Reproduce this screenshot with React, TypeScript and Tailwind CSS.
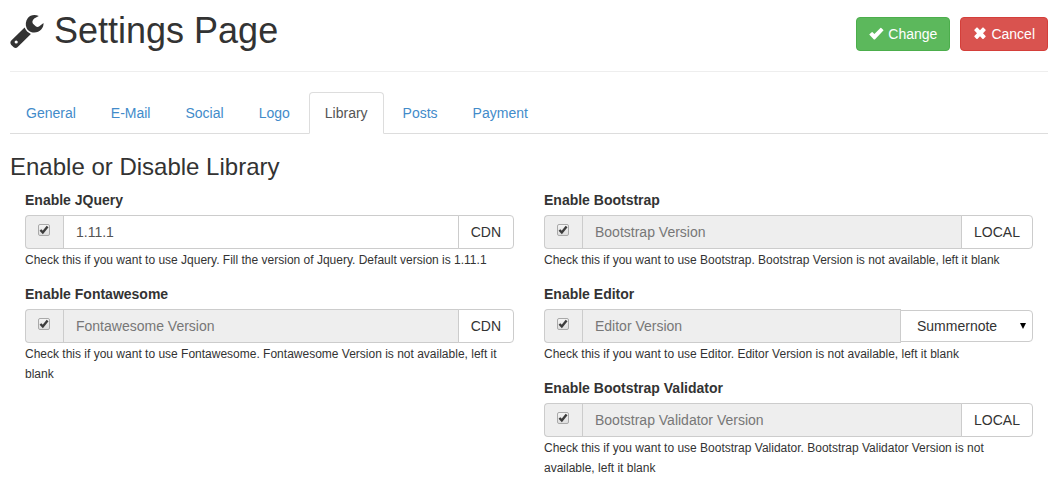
import { useState, type ReactNode } from "react";

const tabs = ["General", "E-Mail", "Social", "Logo", "Library", "Posts", "Payment"];

function WrenchIcon() {
  return (
    <svg viewBox="0 0 36 36" className="h-9 w-9 shrink-0" fill="currentColor" aria-hidden="true">
      <path
        fillRule="evenodd"
        d="M28.800 3C24.600 1.200 20.200 2 17.700 5.200C15.600 8 15.300 11.600 16.500 14.800C17.300 16.800 18.800 18.300 20.900 19C24.800 20.300 28.800 19.200 31.200 16.600C32.900 14.700 33.700 12.200 33.500 10L29 13.500C28 14.200 26.700 14.100 25.700 13.300L23 10.700C22.200 9.700 22.200 8.200 23 7.100L24.200 5.600ZM14.600 14.600L1.300 27.600C.1 28.900 .1 30.700 1.300 32L3.700 34.200C4.900 35.300 6.500 35.200 7.700 34.100L20.900 20.900C18.200 20 15.700 17.600 14.600 14.600ZM6.200 27.400A1.600 1.600 0 1 1 6.200 30.600A1.600 1.600 0 0 1 6.200 27.400Z"
      />
    </svg>
  );
}

function OkIcon() {
  return (
    <svg viewBox="0 0 15 14" className="h-[14px] w-[15px]" fill="currentColor" aria-hidden="true">
      <path d="M.2 7.600L2.700 5.200Q3.200 4.900 3.600 5.300L5.400 7L11.400 .9Q11.900 .6 12.300 1L14.600 3.200L5.900 12.400Q5.400 12.800 4.900 12.400Z" />
    </svg>
  );
}

function RemoveIcon() {
  return (
    <svg viewBox="0 0 14 14" className="h-[14px] w-[14px]" fill="currentColor" aria-hidden="true">
      <path d="M3.600 .5Q4 .3 4.400 .6L7 3.200L9.600 .6Q10 .3 10.400 .6L12.600 2.800Q12.900 3.200 12.600 3.600L10 6.300L12.600 8.900Q12.900 9.300 12.600 9.700L10.400 11.900Q10 12.200 9.600 11.900L7 9.300L4.400 11.900Q4 12.200 3.600 11.900L1.400 9.700Q1.100 9.300 1.400 8.900L4 6.300L1.400 3.600Q1.100 3.200 1.400 2.800Z" />
    </svg>
  );
}

type LibraryFieldProps = {
  id: string;
  name: string;
  help: string;
  placeholder: string;
  value?: string;
  disabled?: boolean;
  children: ReactNode;
};

function SourceButton({ children }: { children: ReactNode }) {
  return (
    <button
      type="button"
      className="-ml-px h-[34px] rounded-r border border-[#ccc] bg-white px-3 text-[#333] hover:bg-[#e6e6e6]"
    >
      {children}
    </button>
  );
}

function LibraryField({ id, name, help, placeholder, value, disabled, children }: LibraryFieldProps) {
  const [enabled, setEnabled] = useState(true);
  return (
    <div className="mb-[14px]">
      <label htmlFor={id} className="mb-[5px] block font-bold">
        {name}
      </label>
      <div className="flex items-center">
        <span className="flex h-[34px] rounded-l border border-r-0 border-[#ccc] bg-[#eee] pt-2 pr-[13px] pl-3">
          <span className="relative h-3 w-3">
            <input
              type="checkbox"
              checked={enabled}
              onChange={(event) => setEnabled(event.target.checked)}
              aria-label={name}
              className="peer block h-3 w-3 appearance-none rounded-xs border border-[#a9a9a9] bg-linear-to-b from-[#f4f4f4] to-[#dedede]"
            />
            <svg
              viewBox="0 0 12 12"
              className="pointer-events-none absolute inset-0 hidden h-3 w-3 peer-checked:block"
              fill="none"
              stroke="#3c3c3c"
              strokeWidth="2.4"
              aria-hidden="true"
            >
              <path d="M2.400 6L4.800 8.400L9.600 2.600" />
            </svg>
          </span>
        </span>
        <input
          id={id}
          type="text"
          defaultValue={value}
          placeholder={placeholder}
          disabled={disabled}
          className="h-[34px] min-w-0 flex-1 border border-[#ccc] bg-white px-3 text-[#555] placeholder:text-[#777] disabled:bg-[#eee]"
        />
        {children}
      </div>
      <p className="mt-px text-xs leading-5">{help}</p>
    </div>
  );
}

export default function App() {
  const [active, setActive] = useState("Library");
  return (
    <main className="bg-white pr-[13px] pl-[10px] font-['Liberation_Sans',Arial,sans-serif] text-sm leading-5 text-[#333]">
      <header className="flex items-start justify-between border-b border-[#eee] pb-5">
        <h1 className="flex items-center gap-2 pt-[11px] text-4xl leading-10">
          <WrenchIcon />
          Settings Page
        </h1>
        <div className="flex gap-[10px] pt-[17px]">
          <button
            type="button"
            className="flex h-[34px] items-center gap-1 rounded border border-[#4cae4c] bg-[#5cb85c] px-3 text-white"
          >
            <OkIcon />
            Change
          </button>
          <button
            type="button"
            className="flex h-[34px] items-center gap-1 rounded border border-[#d43f3a] bg-[#d9534f] px-3 text-white"
          >
            <RemoveIcon />
            Cancel
          </button>
        </div>
      </header>

      <nav className="mt-5 flex gap-[3px] border-b border-[#ddd]">
        {tabs.map((tab) => (
          <a
            key={tab}
            href={`#${tab.toLowerCase()}`}
            onClick={() => setActive(tab)}
            aria-current={tab === active ? "page" : undefined}
            className={
              tab === active
                ? "-mb-px rounded-t border border-[#ddd] border-b-white bg-white px-[15px] py-[10px] text-[#555]"
                : "-mb-px rounded-t border border-transparent px-[15px] py-[10px] text-[#428bca]"
            }
          >
            {tab}
          </a>
        ))}
      </nav>

      <h2 className="mt-5 mb-[10px] text-2xl leading-[26px]">Enable or Disable Library</h2>

      <form className="grid grid-cols-2">
        <div className="px-[15px]">
          <LibraryField
            id="jquery"
            name="Enable JQuery"
            placeholder="JQuery Version"
            value="1.11.1"
            help="Check this if you want to use Jquery. Fill the version of Jquery. Default version is 1.11.1"
          >
            <SourceButton>CDN</SourceButton>
          </LibraryField>
          <LibraryField
            id="fontawesome"
            name="Enable Fontawesome"
            placeholder="Fontawesome Version"
            disabled
            help="Check this if you want to use Fontawesome. Fontawesome Version is not available, left it blank"
          >
            <SourceButton>CDN</SourceButton>
          </LibraryField>
        </div>
        <div className="px-[15px]">
          <LibraryField
            id="bootstrap"
            name="Enable Bootstrap"
            placeholder="Bootstrap Version"
            disabled
            help="Check this if you want to use Bootstrap. Bootstrap Version is not available, left it blank"
          >
            <SourceButton>LOCAL</SourceButton>
          </LibraryField>
          <LibraryField
            id="editor"
            name="Enable Editor"
            placeholder="Editor Version"
            disabled
            help="Check this if you want to use Editor. Editor Version is not available, left it blank"
          >
            <span className="relative -ml-px flex">
              <select
                aria-label="Editor"
                className="h-8 w-[133px] appearance-none rounded-r border border-[#ccc] bg-white pl-4 text-[#333]"
              >
                <option>Summernote</option>
              </select>
              <svg
                viewBox="0 0 6 6"
                className="pointer-events-none absolute top-[13px] right-[7px] h-[6px] w-[6px]"
                fill="#000"
                aria-hidden="true"
              >
                <path d="M0 0H6L3 6Z" />
              </svg>
            </span>
          </LibraryField>
          <LibraryField
            id="validator"
            name="Enable Bootstrap Validator"
            placeholder="Bootstrap Validator Version"
            disabled
            help="Check this if you want to use Bootstrap Validator. Bootstrap Validator Version is not available, left it blank"
          >
            <SourceButton>LOCAL</SourceButton>
          </LibraryField>
        </div>
      </form>
    </main>
  );
}
